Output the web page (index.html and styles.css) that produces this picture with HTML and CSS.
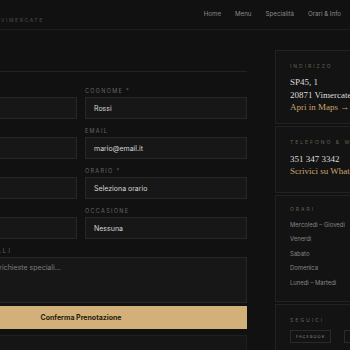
FILE: index.html
```html
<!DOCTYPE html>
<html lang="it">
<head>
<meta charset="utf-8">
<title>Prenota</title>
<link rel="stylesheet" href="styles.css">
</head>
<body>
<header class="site-header">
  <div class="brand"><span class="brand-sub">VIMERCATE</span></div>
  <nav class="nav">
    <a href="#">Home</a>
    <a href="#">Menu</a>
    <a href="#">Specialità</a>
    <a href="#">Orari &amp; Info</a>
  </nav>
</header>
<main class="layout">
  <section class="booking">
    <div class="booking-head"><h2 class="booking-title">Prenota</h2></div>
    <form class="booking-form">
      <div class="field"><label>Nome *</label><div class="input">Mario</div></div>
      <div class="field"><label>Cognome *</label><div class="input">Rossi</div></div>
      <div class="field"><label>Telefono *</label><div class="input">+39</div></div>
      <div class="field"><label>Email</label><div class="input">mario@email.it</div></div>
      <div class="field"><label>Data *</label><div class="input">gg/mm</div></div>
      <div class="field"><label>Orario *</label><div class="input">Seleziona orario</div></div>
      <div class="field"><label>Persone *</label><div class="input">2</div></div>
      <div class="field"><label>Occasione</label><div class="input">Nessuna</div></div>
      <div class="field field-full"><label>Richieste speciali</label><div class="input textarea">Allergie, intolleranze o richieste speciali...</div></div>
    </form>
    <button class="submit" type="button">Conferma Prenotazione</button>
    <div class="after"></div>
  </section>
  <aside class="sidebar">
    <div class="card">
      <div class="card-label">Indirizzo</div>
      <div class="card-line">SP45, 1</div>
      <div class="card-line">20871 Vimercate (MB)</div>
      <div class="card-line card-link">Apri in Maps →</div>
    </div>
    <div class="card card-phone">
      <div class="card-label">Telefono &amp; WhatsApp</div>
      <div class="card-line">351 347 3342</div>
      <div class="card-line card-link">Scrivici su WhatsApp</div>
    </div>
    <div class="card card-hours">
      <div class="card-label">Orari</div>
      <div class="hours-row">Mercoledì – Giovedì</div>
      <div class="hours-row">Venerdì</div>
      <div class="hours-row">Sabato</div>
      <div class="hours-row">Domenica</div>
      <div class="hours-row">Lunedì – Martedì</div>
    </div>
    <div class="card">
      <div class="card-label">Seguici</div>
      <div class="socials">
        <span class="social">Facebook</span>
        <span class="social">Instagram</span>
      </div>
    </div>
  </aside>
</main>
</body>
</html>
```
FILE: styles.css
```css
* { box-sizing: border-box; margin: 0; padding: 0; }
html, body { background: #111111; }
body {
  font-family: Inter, "Noto Sans", sans-serif;
  color: #cccccc;
  width: 350px;
  height: 350px;
  overflow: hidden;
}
a { color: inherit; text-decoration: none; }

.site-header {
  height: 30px;
  border-bottom: 1px solid #1e1e1e;
  display: flex;
  justify-content: space-between;
  align-items: flex-start;
  padding-right: 9px;
}
.brand {
  padding-top: 17px;
  padding-left: 1px;
  font-size: 5px;
  line-height: 6px;
  letter-spacing: 1.6px;
  color: #4d4d4d;
}
.nav {
  display: flex;
  gap: 14px;
  padding-top: 10px;
  font-size: 6.2px;
  line-height: 8px;
  color: #8a8a8a;
}

.layout {
  display: grid;
  grid-template-columns: 332px 240px;
  column-gap: 28px;
  margin-left: -85px;
  padding-top: 20px;
  align-items: start;
}

.booking-head {
  height: 22px;
  border-bottom: 1px solid #232323;
}
.booking-title {
  font-family: "Liberation Serif", serif;
  font-weight: 400;
  font-size: 11px;
  line-height: 14px;
  color: #c9a56b;
}
.booking-form {
  display: grid;
  grid-template-columns: 1fr 1fr;
  column-gap: 8px;
  row-gap: 9px;
  padding-top: 16px;
}
.field label {
  display: block;
  font-size: 5.5px;
  line-height: 6px;
  letter-spacing: 1.3px;
  color: #666666;
  text-transform: uppercase;
  margin-bottom: 3px;
  white-space: nowrap;
}
.input {
  height: 22px;
  background: #171717;
  border: 1px solid #262626;
  font-size: 7px;
  color: #d6d6d6;
  padding-left: 8px;
  display: flex;
  align-items: center;
  white-space: nowrap;
  overflow: hidden;
}
.field-full { grid-column: 1 / -1; }
.field-full label { letter-spacing: 2.4px; }
.textarea {
  height: 46px;
  align-items: flex-start;
  padding-top: 6px;
  line-height: 8px;
  color: #7c7c7c;
}
.submit {
  display: flex;
  align-items: center;
  justify-content: center;
  width: 100%;
  height: 23px;
  margin-top: 3px;
  border: 0;
  background: #d3b07a;
  color: #2a1d0b;
  font-family: Inter, "Noto Sans", sans-serif;
  font-weight: 700;
  font-size: 7px;
}
.after {
  margin-top: 6px;
  height: 40px;
  background: #151515;
  border: 1px solid #1f1f1f;
}

.sidebar {
  display: flex;
  flex-direction: column;
  gap: 2px;
}
.card {
  background: #131313;
  border: 1px solid #222222;
  padding: 12px 14px 9px;
}
.card-label {
  font-size: 5px;
  line-height: 6px;
  letter-spacing: 2px;
  color: #66604f;
  text-transform: uppercase;
  margin-bottom: 7px;
  white-space: nowrap;
}
.card-line {
  font-family: "Liberation Serif", serif;
  font-size: 9px;
  line-height: 12.5px;
  color: #dcdcdc;
  white-space: nowrap;
}
.card-link { color: #c9a56b; }
.card-phone { padding-bottom: 14px; }
.card-phone .card-label { margin-bottom: 8px; }
.card-hours { padding-top: 10px; padding-bottom: 11px; }
.card-hours .card-label { margin-bottom: 6px; }
.hours-row {
  font-size: 5.9px;
  line-height: 14.5px;
  color: #858585;
  white-space: nowrap;
}
.socials {
  display: flex;
  gap: 13px;
}
.social {
  display: flex;
  align-items: center;
  height: 13px;
  padding: 0 5px;
  border: 1px solid #2a2a2a;
  font-size: 4px;
  letter-spacing: 1px;
  color: #8a8a8a;
  text-transform: uppercase;
}
```
